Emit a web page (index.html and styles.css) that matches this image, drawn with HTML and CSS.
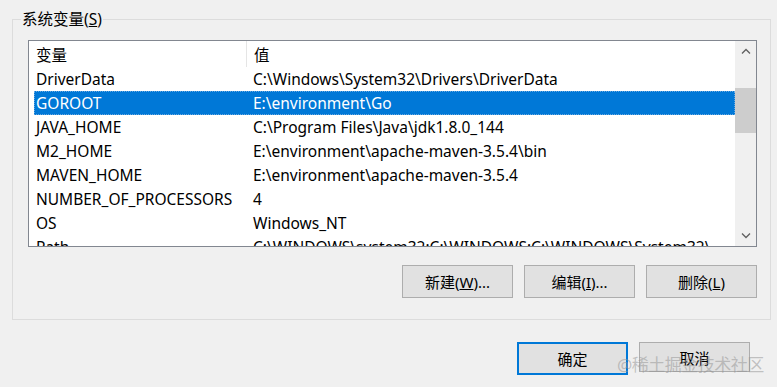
FILE: index.html
```html
<!DOCTYPE html>
<html lang="zh-CN">
  <head>
    <meta charset="UTF-8" />
    <title>系统变量</title>
    <link rel="stylesheet" href="styles.css">
  </head>
  <body>
    <fieldset class="group">
      <legend>系统变量(<u>S</u>)</legend>
      <div class="listbox">
        <div class="rows">
          <div class="row head">
            <span class="name">变量</span>
            <span class="value">值</span>
          </div>
          <div class="row"><span class="name">DriverData</span><span class="value">C:\Windows\System32\Drivers\DriverData</span></div>
          <div class="row selected"><span class="name">GOROOT</span><span class="value">E:\environment\Go</span></div>
          <div class="row"><span class="name">JAVA_HOME</span><span class="value">C:\Program Files\Java\jdk1.8.0_144</span></div>
          <div class="row"><span class="name">M2_HOME</span><span class="value">E:\environment\apache-maven-3.5.4\bin</span></div>
          <div class="row"><span class="name">MAVEN_HOME</span><span class="value">E:\environment\apache-maven-3.5.4</span></div>
          <div class="row"><span class="name">NUMBER_OF_PROCESSORS</span><span class="value">4</span></div>
          <div class="row"><span class="name">OS</span><span class="value">Windows_NT</span></div>
          <div class="row"><span class="name">Path</span><span class="value">C:\WINDOWS\system32;C:\WINDOWS;C:\WINDOWS\System32\</span></div>
        </div>
        <div class="scrollbar">
          <svg class="arrow" width="10" height="6" viewBox="0 0 10 6"><path d="M1 5.5 L5 1.5 L9 5.5" fill="none" stroke="#606060" stroke-width="1.3"/></svg>
          <div class="track"><div class="thumb"></div></div>
          <svg class="arrow" width="10" height="6" viewBox="0 0 10 6"><path d="M1 0.5 L5 4.5 L9 0.5" fill="none" stroke="#606060" stroke-width="1.3"/></svg>
        </div>
      </div>
      <div class="actions">
        <button class="btn">新建(<u>W</u>)...</button>
        <button class="btn">编辑(<u>I</u>)...</button>
        <button class="btn">删除(<u>L</u>)</button>
      </div>
    </fieldset>
    <div class="footer">
      <button class="btn default">确定</button>
      <button class="btn cancel">取消</button>
      <span class="watermark">@稀土掘金技术社区</span>
    </div>
  </body>
</html>
```

FILE: styles.css
```css
body {
  margin: 0;
  background-color: #f0f0f0;
  font-family: "Noto Sans", "Noto Sans CJK SC", sans-serif;
  font-size: 15.5px;
  color: #000;
  width: 777px;
  height: 387px;
  overflow: hidden;
  position: relative;
}
.group {
  margin: 10px 6px 0 12px;
  padding: 0 13px 0 15px;
  border: 1px solid #dcdcdc;
  height: 310px;
  box-sizing: border-box;
  width: 759px;
}
.group legend {
  padding: 0 1px;
  margin-left: -7px;
  line-height: 18px;
  font-size: 15.5px;
}
.listbox {
  display: flex;
  border: 1px solid #828790;
  background-color: #fff;
  height: 207px;
  margin-top: 12px;
  box-sizing: border-box;
}
.rows {
  flex: 1;
  overflow: hidden;
  padding-left: 5px;
}
.row {
  display: flex;
  height: 24px;
  line-height: 24px;
  white-space: nowrap;
}
.row.head {
  height: 26px;
  line-height: 28px;
}
.row .name {
  width: 210px;
  padding-left: 2px;
  flex: none;
}
.row .value {
  padding-left: 7px;
}
.row.head .value {
  border-left: 1px solid #e5e5e5;
}
.row.selected {
  background-color: #0078d7;
  color: #fff;
  outline: 1px dotted #6aa9e0;
  outline-offset: -1px;
}
.scrollbar {
  width: 21px;
  flex: none;
  background-color: #f0f0f0;
  display: flex;
  flex-direction: column;
  align-items: center;
}
.scrollbar .arrow {
  margin: 7px 0;
}
.track {
  flex: 1;
  width: 100%;
  padding: 27px 0 0 0;
  box-sizing: border-box;
}
.thumb {
  width: 100%;
  height: 45px;
  background-color: #cdcdcd;
}
.actions {
  display: flex;
  justify-content: flex-end;
  gap: 11px;
  margin-top: 18px;
}
.btn {
  font-family: "Noto Sans", "Noto Sans CJK SC", sans-serif;
  font-size: 15px;
  width: 111px;
  height: 33px;
  background-color: #e1e1e1;
  border: 1px solid #adadad;
  padding: 0;
  color: #000;
}
.footer {
  display: flex;
  gap: 11px;
  padding: 22px 0 0 517px;
}
.btn.default {
  border: 2px solid #0078d7;
}
.btn.cancel {
  height: 30px;
}
.watermark {
  position: absolute;
  left: 617px;
  top: 351px;
  font-size: 17px;
  color: rgba(150, 150, 150, 0.55);
  letter-spacing: -0.5px;
}
```
